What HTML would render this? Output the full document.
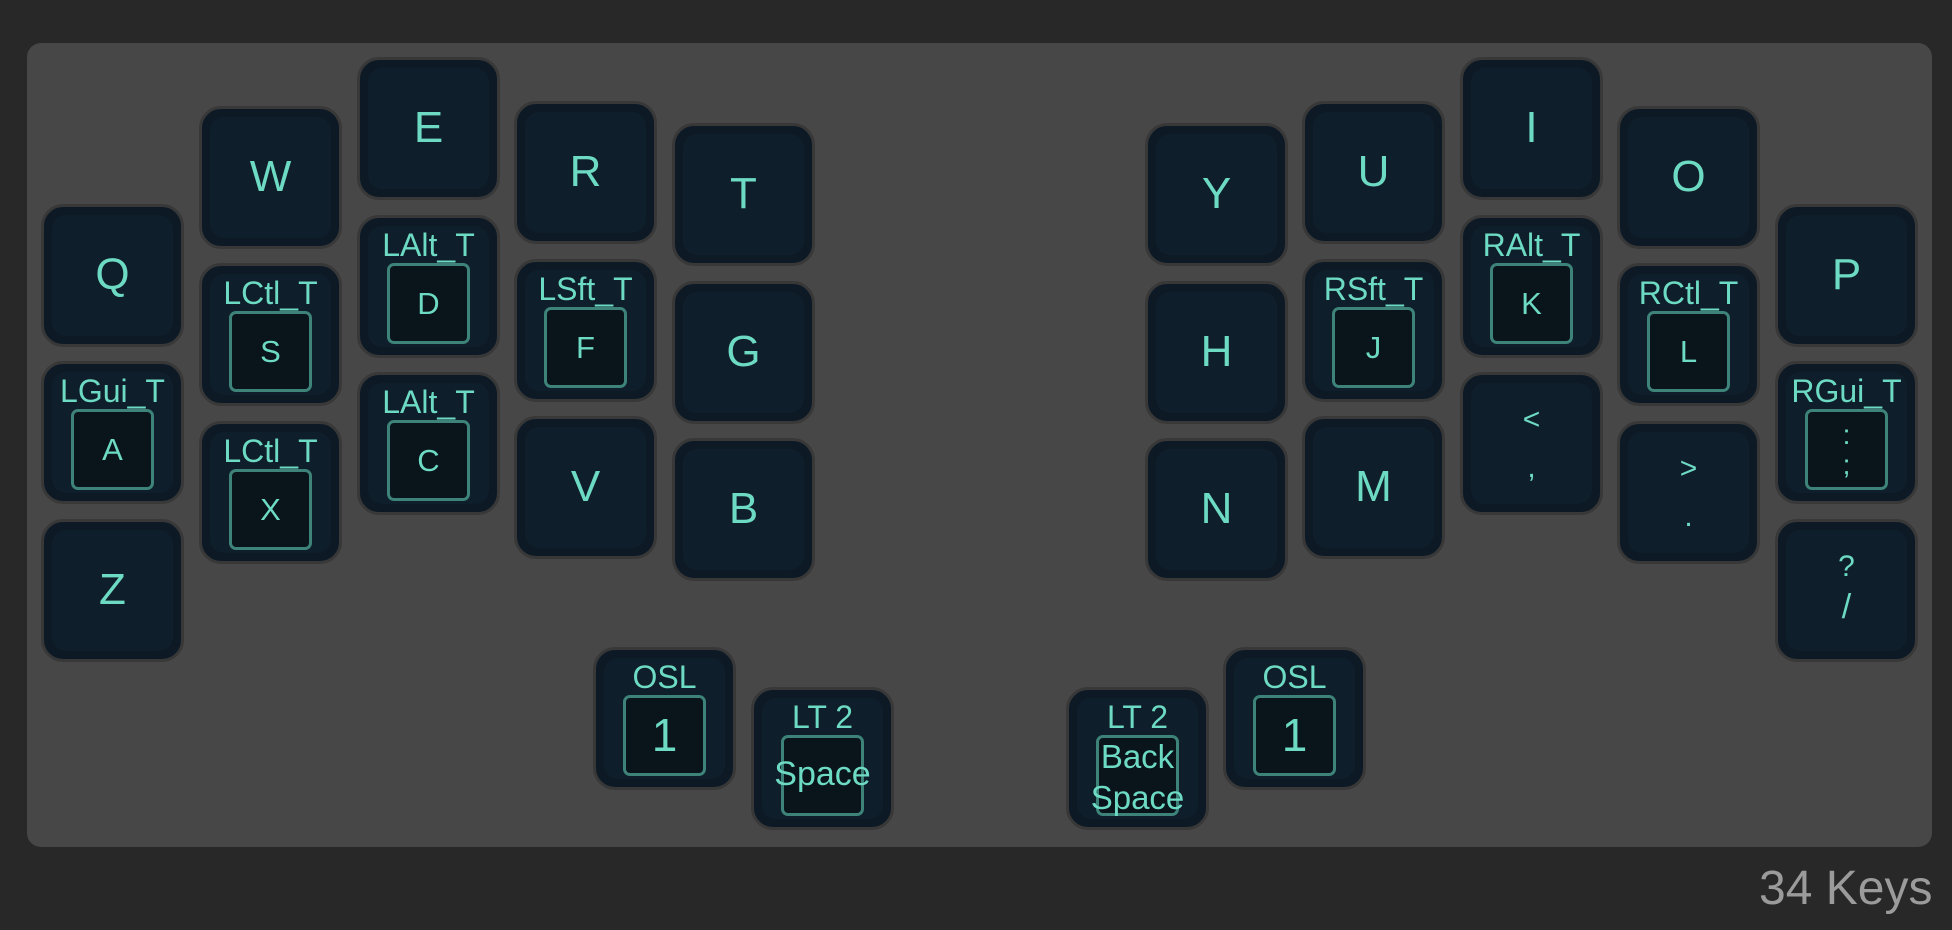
<!DOCTYPE html>
<html><head><meta charset="utf-8"><style>
html,body{margin:0;padding:0;}
body{width:1952px;height:930px;background:#282828;position:relative;overflow:hidden;font-family:"Liberation Sans",sans-serif;color:#6ddac3;}
.panel{position:absolute;left:27px;top:43px;width:1905px;height:804px;background:#474747;border-radius:14px;}
.k{position:absolute;width:137px;height:137px;border:3.5px solid #383838;border-radius:22px;background:#0d1a25;box-sizing:content-box;}
.k::before{content:"";position:absolute;left:8px;top:8px;right:8px;bottom:8px;background:#0f1e2b;border-radius:14px;}
.c{position:absolute;left:0;right:0;text-align:center;}
.big{top:0;height:136px;line-height:136px;font-size:44px;}
.lbl{top:10px;font-size:32px;line-height:34px;z-index:2;}
.box{position:absolute;left:27px;top:45px;width:77px;height:75px;border:3px solid #3d8379;border-radius:7px;background:#0a141b;text-align:center;line-height:75px;font-size:31px;z-index:1;}
.sh{font-size:30px;line-height:34px;}
.keys{position:absolute;left:1759px;top:861px;font-size:48px;color:#9b9b9b;line-height:56px;}
</style></head><body>
<div class="panel"></div>

<div class="k" style="left:41px;top:204px"><div class="c big">Q</div></div>
<div class="k" style="left:41px;top:361px"><div class="c lbl">LGui_T</div><div class="box">A</div></div>
<div class="k" style="left:41px;top:519px"><div class="c big">Z</div></div>

<div class="k" style="left:199px;top:106px"><div class="c big">W</div></div>
<div class="k" style="left:199px;top:263px"><div class="c lbl">LCtl_T</div><div class="box">S</div></div>
<div class="k" style="left:199px;top:421px"><div class="c lbl">LCtl_T</div><div class="box">X</div></div>

<div class="k" style="left:357px;top:57px"><div class="c big">E</div></div>
<div class="k" style="left:357px;top:215px"><div class="c lbl">LAlt_T</div><div class="box">D</div></div>
<div class="k" style="left:357px;top:372px"><div class="c lbl">LAlt_T</div><div class="box">C</div></div>

<div class="k" style="left:514px;top:101px"><div class="c big">R</div></div>
<div class="k" style="left:514px;top:259px"><div class="c lbl">LSft_T</div><div class="box">F</div></div>
<div class="k" style="left:514px;top:416px"><div class="c big">V</div></div>

<div class="k" style="left:672px;top:123px"><div class="c big">T</div></div>
<div class="k" style="left:672px;top:281px"><div class="c big">G</div></div>
<div class="k" style="left:672px;top:438px"><div class="c big">B</div></div>

<div class="k" style="left:1145px;top:123px"><div class="c big">Y</div></div>
<div class="k" style="left:1145px;top:281px"><div class="c big">H</div></div>
<div class="k" style="left:1145px;top:438px"><div class="c big">N</div></div>

<div class="k" style="left:1302px;top:101px"><div class="c big">U</div></div>
<div class="k" style="left:1302px;top:259px"><div class="c lbl">RSft_T</div><div class="box">J</div></div>
<div class="k" style="left:1302px;top:416px"><div class="c big">M</div></div>

<div class="k" style="left:1460px;top:57px"><div class="c big">I</div></div>
<div class="k" style="left:1460px;top:215px"><div class="c lbl">RAlt_T</div><div class="box">K</div></div>
<div class="k" style="left:1460px;top:372px"><div class="c sh" style="top:28px">&lt;</div><div class="c sh" style="top:76px">,</div></div>

<div class="k" style="left:1617px;top:106px"><div class="c big">O</div></div>
<div class="k" style="left:1617px;top:263px"><div class="c lbl">RCtl_T</div><div class="box">L</div></div>
<div class="k" style="left:1617px;top:421px"><div class="c sh" style="top:28px">&gt;</div><div class="c sh" style="top:76px">.</div></div>

<div class="k" style="left:1775px;top:204px"><div class="c big">P</div></div>
<div class="k" style="left:1775px;top:361px"><div class="c lbl">RGui_T</div><div class="box" style="line-height:30px;font-size:28px"><div style="margin-top:8px">:</div><div>;</div></div></div>
<div class="k" style="left:1775px;top:519px"><div class="c sh" style="top:28px">?</div><div class="c sh" style="top:68px;font-size:34px">/</div></div>

<div class="k" style="left:593px;top:647px"><div class="c lbl">OSL</div><div class="box" style="font-size:46px">1</div></div>
<div class="k" style="left:751px;top:687px"><div class="c lbl">LT 2</div><div class="box"></div><div class="c" style="top:66px;font-size:34px;line-height:36px;z-index:2">Space</div></div>
<div class="k" style="left:1066px;top:687px"><div class="c lbl">LT 2</div><div class="box"></div><div class="c" style="top:46px;font-size:33px;line-height:41px;z-index:2">Back<br>Space</div></div>
<div class="k" style="left:1223px;top:647px"><div class="c lbl">OSL</div><div class="box" style="font-size:46px">1</div></div>

<div class="keys">34 Keys</div>
</body></html>
